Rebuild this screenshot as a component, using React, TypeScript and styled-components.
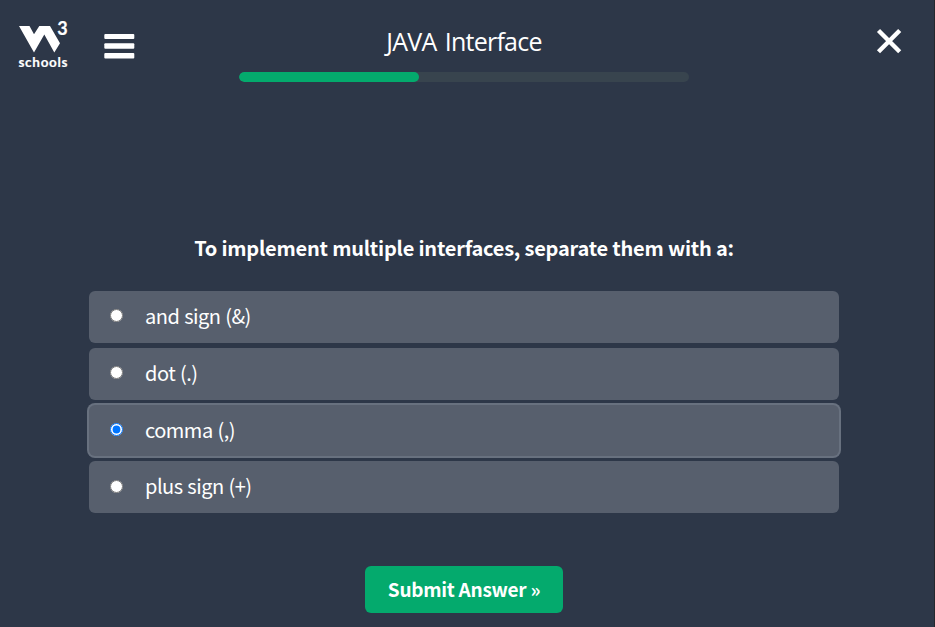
import React, { useState } from "react";
import styled, { createGlobalStyle } from "styled-components";

const GlobalStyle = createGlobalStyle`
  * { box-sizing: border-box; }
  body { margin: 0; background: #2d3748; }
`;

const bodyFont = `"Source Sans Pro", "Noto Sans CJK SC", sans-serif`;

const Page = styled.div`
  width: 100%;
  height: 627px;
  overflow: hidden;
  background: #2d3748;
  border-right: 1px solid #25272d;
  color: #fff;
  font-family: ${bodyFont};
`;

const Header = styled.header`
  display: grid;
  grid-template-columns: 239px 450px 1fr;
  height: 100px;
`;

const Brand = styled.div`
  display: flex;
  align-items: flex-start;
  padding: 14px 0 0 16px;
`;

const Logo = styled.svg`
  display: block;
  width: 56px;
  height: 60px;
  overflow: visible;
`;

const LogoText = styled.text<{ $size: number }>`
  font-family: "Lato", sans-serif;
  font-size: ${(p) => p.$size}px;
  font-weight: 700;
  stroke: #fff;
  stroke-width: 0.2px;
`;

const IconButton = styled.button`
  display: block;
  padding: 0;
  border: 0;
  background: none;
  color: #fff;
  svg { display: block; }
`;

const MenuButton = styled(IconButton)`
  margin: 19px 0 0 32px;
`;

const CloseButton = styled(IconButton)`
  justify-self: end;
  align-self: start;
  margin: 28px 31px 0 0;
`;

const Heading = styled.div`
  padding-top: 25px;
  text-align: center;
`;

const Title = styled.h1`
  margin: 0;
  height: 47px;
  font: 400 25px/33px "Segoe UI", "Open Sans", sans-serif;
  letter-spacing: -0.76px;
  word-spacing: 2.6px;
`;

const Track = styled.div`
  height: 10px;
  border-radius: 5px;
  background: #38444e;
  overflow: hidden;
`;

const Fill = styled.div`
  width: 40%;
  height: 100%;
  border-radius: 5px;
  background: #04aa6d;
`;

const Quiz = styled.form`
  width: 750px;
  margin: 0 0 0 89px;
`;

const Question = styled.h2`
  margin: 0;
  padding-top: 133px;
  height: 191px;
  font-size: 20px;
  line-height: 30px;
  font-weight: 700;
  letter-spacing: -0.21px;
  text-align: center;
  white-space: nowrap;
`;

const Options = styled.div`
  display: grid;
  grid-template-rows: 52px 52px 51px 52px;
  row-gap: 5px;
  height: 222px;
`;

const Option = styled.label<{ $selected: boolean }>`
  display: flex;
  align-items: flex-start;
  padding: 0 0 0 20px;
  border-radius: 6px;
  background: #575f6d;
  box-shadow: ${(p) => (p.$selected ? "0 0 0 2px #68717f" : "none")};
  font-size: 20px;
  line-height: 30px;
  letter-spacing: -0.5px;
  word-spacing: 0.8px;
  &:last-child input { margin-top: 19px; }
`;

const Radio = styled.input`
  width: 13px;
  height: 13px;
  margin: 18px 22px 0 1px;
  accent-color: #0075ff;
`;

const AnswerText = styled.span`
  padding-top: 10px;
`;

const Submit = styled.button`
  display: block;
  width: 198px;
  height: 47px;
  margin: 53px auto 0;
  padding: 0 0 2px;
  border: 0;
  border-radius: 6px;
  background: #04aa6d;
  color: #fff;
  font: 700 19px/45px ${bodyFont};
  letter-spacing: -0.26px;
  white-space: nowrap;
`;

const answers = ["and sign (&)", "dot (.)", "comma (,)", "plus sign (+)"];

export default function App() {
  const [selected, setSelected] = useState(2);
  return (
    <Page>
      <GlobalStyle />
      <Header>
        <Brand>
          <Logo viewBox="16 14 56 60" fill="#fff" aria-label="W3Schools">
            <path d="M19 26H29.5L34 34.2L39.3 26H50L60 43.3L54.3 52.5L44.3 34.5L34 52.5Z" />
            <LogoText $size={18} x="57.3" y="35">3</LogoText>
            <LogoText $size={13.5} x="18.5" y="67" textLength="49">schools</LogoText>
          </Logo>
          <MenuButton aria-label="Menu">
            <svg width="31" height="26" viewBox="0 0 31 26" fill="currentColor">
              <rect x="0.3" y="1" width="30" height="5" rx="1" />
              <rect x="0.3" y="10.2" width="30" height="5.5" rx="1" />
              <rect x="0.3" y="20" width="30" height="5.4" rx="1" />
            </svg>
          </MenuButton>
        </Brand>
        <Heading>
          <Title>JAVA Interface</Title>
          <Track><Fill /></Track>
        </Heading>
        <CloseButton aria-label="Close">
          <svg width="27" height="27" viewBox="0 0 27 27" fill="none" stroke="currentColor" strokeWidth="4.4">
            <path d="M2.5 2.5L23.7 23.7M23.7 2.5L2.5 23.7" />
          </svg>
        </CloseButton>
      </Header>
      <Quiz onSubmit={(e) => e.preventDefault()}>
        <Question>To implement multiple interfaces, separate them with a:</Question>
        <Options>
          {answers.map((answer, i) => (
            <Option key={answer} $selected={selected === i}>
              <Radio type="radio" name="answer" checked={selected === i} onChange={() => setSelected(i)} />
              <AnswerText>{answer}</AnswerText>
            </Option>
          ))}
        </Options>
        <Submit type="submit">Submit Answer »</Submit>
      </Quiz>
    </Page>
  );
}
